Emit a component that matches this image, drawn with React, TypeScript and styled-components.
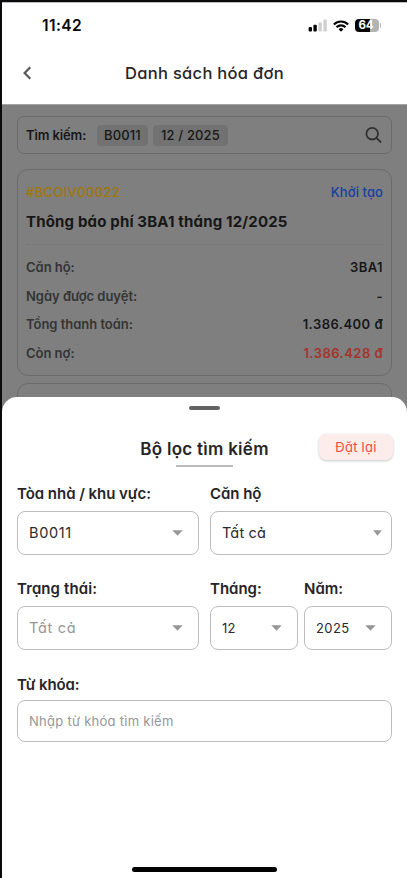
import React from "react";
import styled, { createGlobalStyle, css } from "styled-components";

const GlobalStyle = createGlobalStyle`
  *, *::before, *::after { box-sizing: border-box; }
  body { margin: 0; background: #fff; }
`;

const type = (size: number, weight: number, spacing = 0) => css`
  font-size: ${size}px;
  font-weight: ${weight};
  letter-spacing: ${spacing}px;
  line-height: 20px;
  white-space: nowrap;
`;

const Phone = styled.div`
  position: relative;
  width: 407px;
  height: 878px;
  overflow: hidden;
  background: #fff;
  border-left: 2px solid #0b0b0d;
  border-top: 2px solid #0b0b0d;
  font-family: Inter, "Noto Sans", sans-serif;
  font-feature-settings: "cv11" 1;
  color: #262427;
`;

const StatusBar = styled.header`
  display: flex;
  justify-content: space-between;
  align-items: center;
  height: 46px;
  padding: 0 26px 0 40px;
  border-top: 1px solid #bdbdbd;
`;

const Clock = styled.time`
  ${type(15.5, 600, 0.4)}
  color: #050505;
`;

const StatusIcons = styled.div`
  display: flex;
  align-items: center;
  gap: 6px;
`;

const Battery = styled.div`
  display: flex;
  align-items: center;
  gap: 1px;
  &::after {
    content: "";
    width: 1.5px;
    height: 5px;
    border-radius: 0 2px 2px 0;
    background: #b5b5b5;
  }
`;

const BatteryCell = styled.div`
  display: flex;
  align-items: center;
  justify-content: center;
  width: 24px;
  height: 13px;
  border-radius: 4px;
  background: linear-gradient(90deg, #050505 64%, #b3b3b3 64%);
  color: #fff;
  font-size: 11.5px;
  font-weight: 700;
  line-height: 13px;
  padding-right: 1px;
`;

const NavBar = styled.nav`
  display: grid;
  grid-template-columns: 50px 1fr 50px;
  align-items: center;
  height: 56px;
  padding-bottom: 6px;
`;

const BackButton = styled.button`
  display: flex;
  justify-content: center;
  padding: 0;
  border: 0;
  background: none;
`;

const NavTitle = styled.h1`
  margin: 0;
  text-align: center;
  ${type(16.5, 500, 0.3)}
`;

const Dimmed = styled.main`
  display: flex;
  flex-direction: column;
  height: 310px;
  padding: 11px 15px 0;
  overflow: hidden;
  background: #7f7f7f;
  border-top: 1px solid #a5a5a5;
  color: #171717;
`;

const SearchBar = styled.div`
  display: flex;
  align-items: center;
  height: 38px;
  flex: none;
  margin-bottom: 15px;
  padding: 0 9px 0 8px;
  border: 1px solid #6a6a6a;
  border-radius: 7px;
`;

const SearchLabel = styled.span`
  ${type(13, 600, -0.12)}
  width: 71px;
`;

const Chip = styled.span<{ $width: number }>`
  ${type(13, 500, 0.14)}
  width: ${(p) => p.$width}px;
  height: 21px;
  margin-right: 5px;
  border-radius: 4px;
  background: #727272;
  line-height: 21px;
  text-align: center;
`;

const SearchIcon = styled.svg`
  margin-left: auto;
`;

const Card = styled.article`
  flex: none;
  height: 207px;
  margin-bottom: 7px;
  padding: 12px 8px 0;
  border: 1px solid #6b6b6b;
  border-radius: 11px;
`;

const CardTop = styled.div`
  display: flex;
  justify-content: space-between;
`;

const InvoiceCode = styled.span`
  ${type(13, 450, 0.38)}
  color: #a17805;
`;

const InvoiceState = styled.span`
  ${type(13, 550, 0.08)}
  color: #153f9c;
`;

const CardTitle = styled.h2`
  margin: 10px 0 12px;
  ${type(15, 650, 0.17)}
`;

const Details = styled.dl`
  display: flex;
  flex-direction: column;
  gap: 8.5px;
  margin: 0;
  padding-top: 12px;
  border-top: 1px dotted #717171;
`;

const DetailRow = styled.div`
  display: flex;
  justify-content: space-between;
`;

const DetailLabel = styled.dt`
  ${type(13, 600, -0.03)}
  color: #343434;
`;

const DetailValue = styled.dd<{ $due?: boolean }>`
  margin: 0;
  ${type(13, 600, 0.47)}
  color: ${(p) => (p.$due ? "#a5342a" : "#171717")};
`;

const Sheet = styled.section`
  position: absolute;
  left: 0;
  right: 0;
  bottom: 0;
  height: 481px;
  display: flex;
  flex-direction: column;
  align-items: center;
  padding: 9px 15px 6px;
  border-radius: 15px 15px 0 0;
  background: #fff;
`;

const Grabber = styled.div`
  width: 31px;
  height: 4px;
  border-radius: 2px;
  background: #646264;
`;

const SheetHead = styled.div`
  display: grid;
  grid-template-columns: 1fr auto 1fr;
  width: 100%;
  margin-top: 24px;
`;

const SheetTitle = styled.h2`
  grid-column: 2;
  display: flex;
  flex-direction: column;
  align-items: center;
  margin: 5px 0 0;
  ${type(17, 600, 0.28)}
  &::after {
    content: "";
    width: 57px;
    height: 2px;
    margin-top: 6px;
    background: #bcbcbc;
  }
`;

const ResetButton = styled.button`
  justify-self: end;
  width: 74px;
  height: 26px;
  margin-right: -1px;
  padding: 0;
  border: 0;
  border-radius: 8px;
  background: #fdecec;
  box-shadow: 0 1px 3px rgba(0, 0, 0, 0.22);
  color: #f44a3e;
  font-family: inherit;
  font-feature-settings: inherit;
  ${type(13, 400, 0.25)}
`;

const Form = styled.form`
  display: grid;
  grid-template-columns: 182px 182px;
  column-gap: 11px;
  width: 375px;
  margin-top: 17px;
`;

const MonthYear = styled.div`
  display: grid;
  grid-template-columns: 1fr 1fr;
  gap: 6px;
`;

const Field = styled.div<{ $wide?: boolean; $height: number }>`
  display: flex;
  flex-direction: column;
  gap: 7px;
  min-width: 0;
  height: ${(p) => p.$height}px;
  ${(p) => p.$wide && "grid-column: 1 / -1; gap: 5px; padding-top: 1px;"}
`;

const FieldLabel = styled.label<{ $spacing: number }>`
  ${(p) => type(15, 600, p.$spacing)}
`;

const Box = styled.div<{ $inset?: number; $short?: boolean }>`
  display: flex;
  align-items: center;
  justify-content: space-between;
  flex: none;
  height: ${(p) => (p.$short ? 42 : 44)}px;
  padding: 0 ${(p) => p.$inset ?? 15}px 0 11px;
  border: 1px solid #bdbdbd;
  border-radius: 8px;
`;

const Value = styled.span<{ $muted?: boolean; $small?: boolean; $spacing: number }>`
  ${(p) => type(p.$small ? 13 : 14.5, 400, p.$spacing)}
  color: ${(p) => (p.$muted ? "#969696" : "#2b292c")};
`;

const HomeIndicator = styled.div`
  width: 145px;
  height: 5px;
  margin: auto 1px 0 0;
  border-radius: 3px;
  background: #000;
`;

const Caret = ({ narrow }: { narrow?: boolean }) => (
  <svg width={narrow ? 9 : 11} height="6" viewBox="0 0 11 6" preserveAspectRatio="none">
    <path d="M0.3 0.3h10.4L5.5 5.7z" fill="#969696" />
  </svg>
);

type SelectProps = {
  label: string;
  value: string;
  labelSpacing: number;
  spacing: number;
  height: number;
  muted?: boolean;
  small?: boolean;
  narrow?: boolean;
};

const Select = ({ label, value, labelSpacing, spacing, height, muted, small, narrow }: SelectProps) => (
  <Field $height={height}>
    <FieldLabel $spacing={labelSpacing}>{label}</FieldLabel>
    <Box $inset={narrow ? 9 : 15}>
      <Value $muted={muted} $small={small} $spacing={spacing}>{value}</Value>
      <Caret narrow={narrow} />
    </Box>
  </Field>
);

const details = [
  { label: "Căn hộ:", value: "3BA1" },
  { label: "Ngày được duyệt:", value: "-" },
  { label: "Tổng thanh toán:", value: "1.386.400 đ" },
  { label: "Còn nợ:", value: "1.386.428 đ", due: true },
];

export default function App() {
  return (
    <Phone>
      <GlobalStyle />
      <StatusBar>
        <Clock>11:42</Clock>
        <StatusIcons>
          <svg width="19" height="13" viewBox="0 0 19 13">
            <rect x="0.6" y="8" width="3.4" height="4.5" rx="1" fill="#050505" />
            <rect x="5.4" y="5.8" width="3.4" height="6.7" rx="1" fill="#050505" />
            <rect x="10.4" y="3.2" width="3.4" height="9.3" rx="1" fill="#cfcfcf" />
            <rect x="15.4" y="0.5" width="3.4" height="12" rx="1" fill="#cfcfcf" />
          </svg>
          <svg width="16" height="12" viewBox="0 0 16 12" fill="none" stroke="#050505" strokeWidth="2.1">
            <path d="M0.9 4.4a10.1 10.1 0 0 1 14.2 0" />
            <path d="M3.5 7.2a6.4 6.4 0 0 1 9 0" />
            <path d="M8 11.7 5.6 9.2a3.4 3.4 0 0 1 4.8 0z" fill="#050505" stroke="none" />
          </svg>
          <Battery>
            <BatteryCell>64</BatteryCell>
          </Battery>
        </StatusIcons>
      </StatusBar>
      <NavBar>
        <BackButton aria-label="Back">
          <svg width="10" height="14" viewBox="0 0 10 14" fill="none" stroke="#59575a" strokeWidth="2.2">
            <path d="M8.3 1.2 2.6 7l5.7 5.8" />
          </svg>
        </BackButton>
        <NavTitle>Danh sách hóa đơn</NavTitle>
      </NavBar>
      <Dimmed>
        <SearchBar>
          <SearchLabel>Tìm kiếm:</SearchLabel>
          <Chip $width={51}>B0011</Chip>
          <Chip $width={75}>12 / 2025</Chip>
          <SearchIcon width="17" height="17" viewBox="0 0 17 17" fill="none" stroke="#303030" strokeWidth="1.8">
            <circle cx="7.2" cy="6.7" r="5.8" />
            <path d="M11.4 10.9l4.7 4.6" />
          </SearchIcon>
        </SearchBar>
        <Card>
          <CardTop>
            <InvoiceCode>#BCOIV00022</InvoiceCode>
            <InvoiceState>Khởi tạo</InvoiceState>
          </CardTop>
          <CardTitle>Thông báo phí 3BA1 tháng 12/2025</CardTitle>
          <Details>
            {details.map((d) => (
              <DetailRow key={d.label}>
                <DetailLabel>{d.label}</DetailLabel>
                <DetailValue $due={d.due}>{d.value}</DetailValue>
              </DetailRow>
            ))}
          </Details>
        </Card>
        <Card />
      </Dimmed>
      <Sheet>
        <Grabber />
        <SheetHead>
          <SheetTitle>Bộ lọc tìm kiếm</SheetTitle>
          <ResetButton>Đặt lại</ResetButton>
        </SheetHead>
        <Form>
          <Select label="Tòa nhà / khu vực:" value="B0011" labelSpacing={-0.04} spacing={0.65} height={95} />
          <Select label="Căn hộ" value="Tất cả" labelSpacing={-0.05} spacing={0.1} height={95} narrow />
          <Select label="Trạng thái:" value="Tất cả" labelSpacing={0.1} spacing={0.65} height={95} muted />
          <MonthYear>
            <Select label="Tháng:" value="12" labelSpacing={0} spacing={0.3} height={95} small />
            <Select label="Năm:" value="2025" labelSpacing={0} spacing={0.4} height={95} small />
          </MonthYear>
          <Field $wide $height={68}>
            <FieldLabel $spacing={-0.1}>Từ khóa:</FieldLabel>
            <Box $short>
              <Value $muted $small $spacing={0.27}>Nhập từ khóa tìm kiếm</Value>
            </Box>
          </Field>
        </Form>
        <HomeIndicator />
      </Sheet>
    </Phone>
  );
}
